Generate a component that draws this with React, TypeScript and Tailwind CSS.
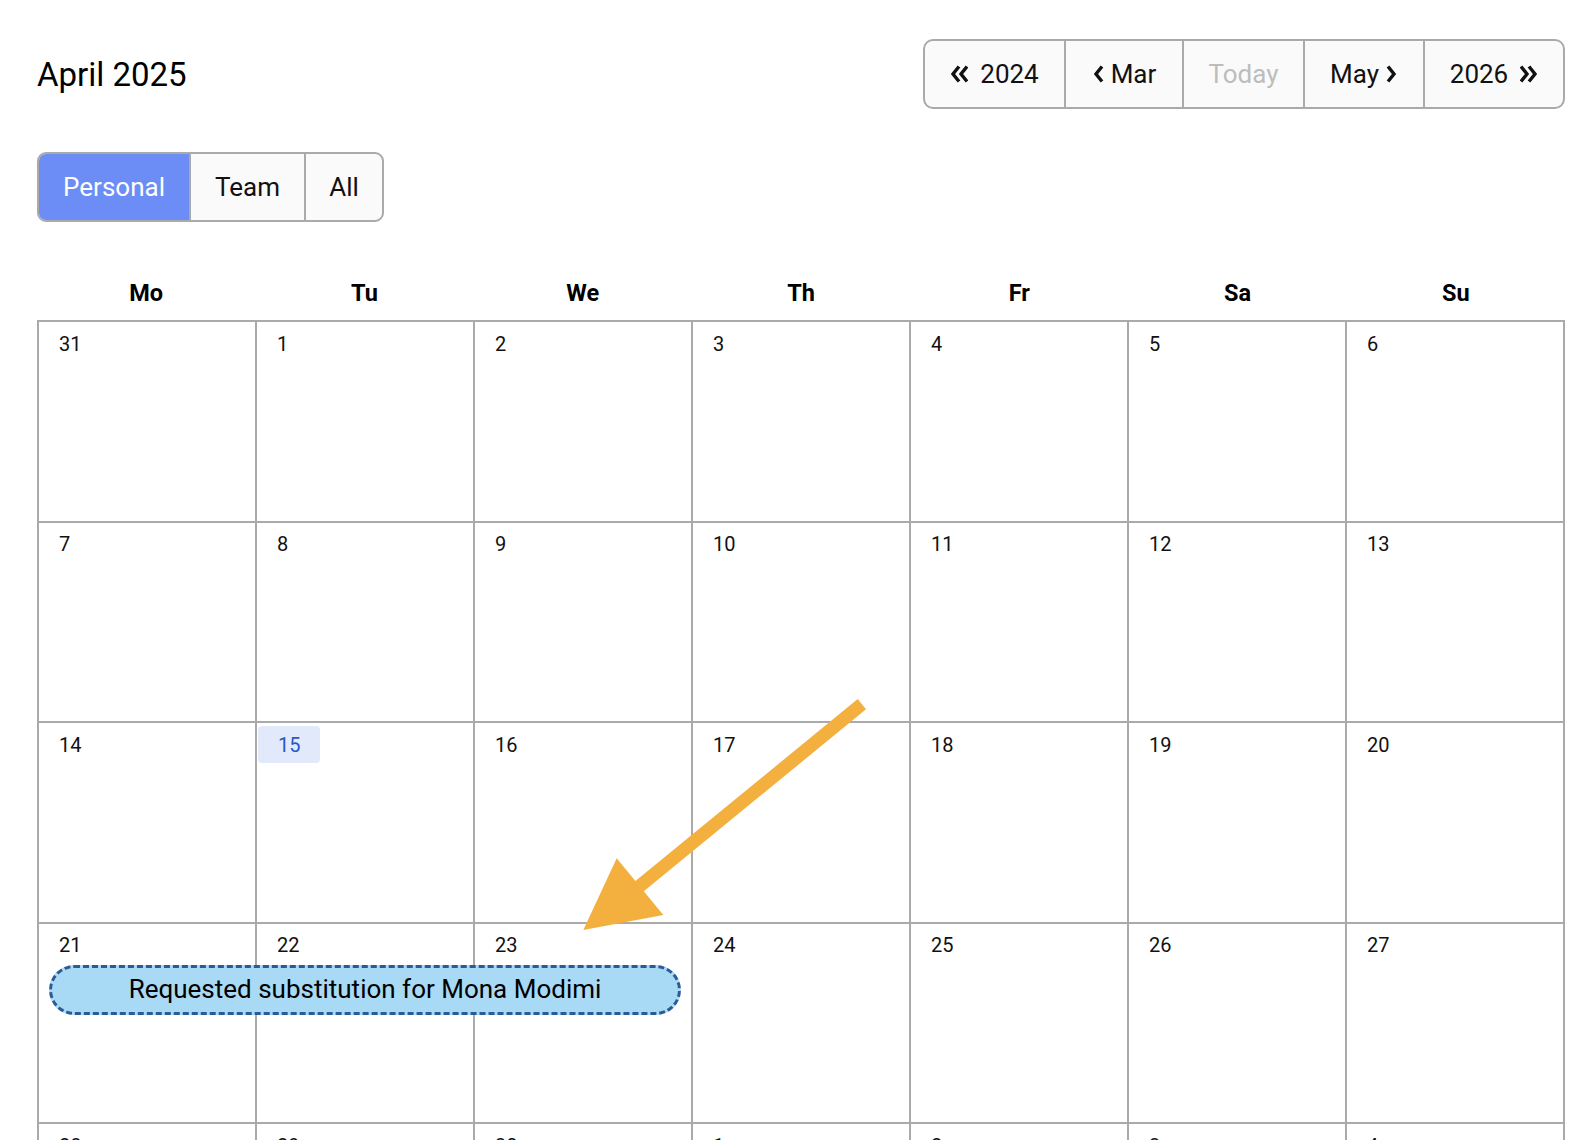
import React from 'react';

const weekdays = ['Mo', 'Tu', 'We', 'Th', 'Fr', 'Sa', 'Su'];

const weeks: number[][] = [
  [31, 1, 2, 3, 4, 5, 6],
  [7, 8, 9, 10, 11, 12, 13],
  [14, 15, 16, 17, 18, 19, 20],
  [21, 22, 23, 24, 25, 26, 27],
  [28, 29, 30, 1, 2, 3, 4],
];

function ChevronsLeft() {
  return (
    <svg width="18" height="20" viewBox="0 0 18 20" fill="none" stroke="currentColor" strokeWidth="3.4">
      <path d="M9 2.5 3 10 9 17.5" />
      <path d="M17 2.5 11 10 17 17.5" />
    </svg>
  );
}

function ChevronsRight() {
  return (
    <svg width="18" height="20" viewBox="0 0 18 20" fill="none" stroke="currentColor" strokeWidth="3.4">
      <path d="M1 2.5 7 10 1 17.5" />
      <path d="M9 2.5 15 10 9 17.5" />
    </svg>
  );
}

function ChevronLeft() {
  return (
    <svg width="12" height="20" viewBox="0 0 12 20" fill="none" stroke="currentColor" strokeWidth="3.4">
      <path d="M10 2.5 4 10 10 17.5" />
    </svg>
  );
}

function ChevronRight() {
  return (
    <svg width="12" height="20" viewBox="0 0 12 20" fill="none" stroke="currentColor" strokeWidth="3.4">
      <path d="M2 2.5 8 10 2 17.5" />
    </svg>
  );
}

function NavButtons() {
  return (
    <div className="flex h-[70px] overflow-hidden rounded-[10px] border-2 border-[#aaa] bg-[#fafafa] text-[26px] text-[#111]">
      <button className="flex w-[139px] items-center justify-center gap-[12px]">
        <ChevronsLeft />
        <span>2024</span>
      </button>
      <button className="flex w-[118px] items-center justify-center gap-[7px] border-l-2 border-[#aaa]">
        <ChevronLeft />
        <span>Mar</span>
      </button>
      <button className="flex w-[121px] items-center justify-center border-l-2 border-[#aaa] text-[#bdbdbd]">
        Today
      </button>
      <button className="flex w-[120px] items-center justify-center gap-[7px] border-l-2 border-[#aaa]">
        <span>May</span>
        <ChevronRight />
      </button>
      <button className="flex w-[140px] items-center justify-center gap-[12px] border-l-2 border-[#aaa]">
        <span>2026</span>
        <ChevronsRight />
      </button>
    </div>
  );
}

function ScopeToggle() {
  return (
    <div className="mt-[43px] inline-flex h-[70px] overflow-hidden rounded-[9px] border-2 border-[#aaa] bg-[#fafafa] text-[26px]">
      <button className="w-[150px] bg-[#6c8cf6] text-white">Personal</button>
      <button className="w-[115px] border-l-2 border-[#aaa] text-[#111]">Team</button>
      <button className="w-[78px] border-l-2 border-[#aaa] text-[#111]">All</button>
    </div>
  );
}

function Arrow() {
  return (
    <svg
      className="pointer-events-none absolute left-0 top-0"
      width="1596"
      height="1140"
      viewBox="0 0 1596 1140"
    >
      <polygon
        fill="#f3b03f"
        points="857.7,699 866,709.3 643.8,891.3 663.3,915 583.3,930 616.7,858.3 635.4,881.1"
      />
    </svg>
  );
}

export default function App() {
  return (
    <div className="relative h-screen overflow-hidden bg-white pl-[37px] pr-[31px] pt-[39px] font-['Roboto','Liberation_Sans',sans-serif] text-black">
      <div className="flex h-[70px] items-center justify-between">
        <h1 className="text-[33px] leading-none">April 2025</h1>
        <NavButtons />
      </div>

      <ScopeToggle />

      <div className="mt-[55px] grid h-[43px] grid-cols-7 text-center text-[23.5px] font-bold leading-[32px]">
        {weekdays.map((d) => (
          <div key={d}>{d}</div>
        ))}
      </div>

      <div className="border-l-2 border-t-2 border-[#aaa]">
        {weeks.map((week, wi) => (
          <div key={wi} className="relative grid grid-cols-7">
            {week.map((day, di) => {
              const isToday = wi === 2 && day === 15;
              return (
                <div key={di} className="h-[200.6px] border-b-2 border-r-2 border-[#aaa]">
                  <span
                    className={
                      isToday
                        ? 'ml-[1px] mt-[3px] inline-flex h-[37px] items-center rounded-[4px] bg-[#e2e9fb] px-[20px] text-[20px] text-[#2a56c6]'
                        : 'ml-[1px] mt-[3px] inline-flex h-[37px] items-center px-[19px] text-[20px] text-[#111]'
                    }
                  >
                    {day}
                  </span>
                </div>
              );
            })}
            {wi === 3 && (
              <div className="absolute inset-x-0 top-[41px] grid grid-cols-7">
                <div className="col-span-3 ml-[10px] mr-[12px] flex h-[50px] items-center justify-center rounded-full border-[3px] border-dashed border-[#2b5a97] bg-[#a8d9f5] text-[26px]">
                  Requested substitution for Mona Modimi
                </div>
              </div>
            )}
          </div>
        ))}
      </div>

      <Arrow />
    </div>
  );
}
